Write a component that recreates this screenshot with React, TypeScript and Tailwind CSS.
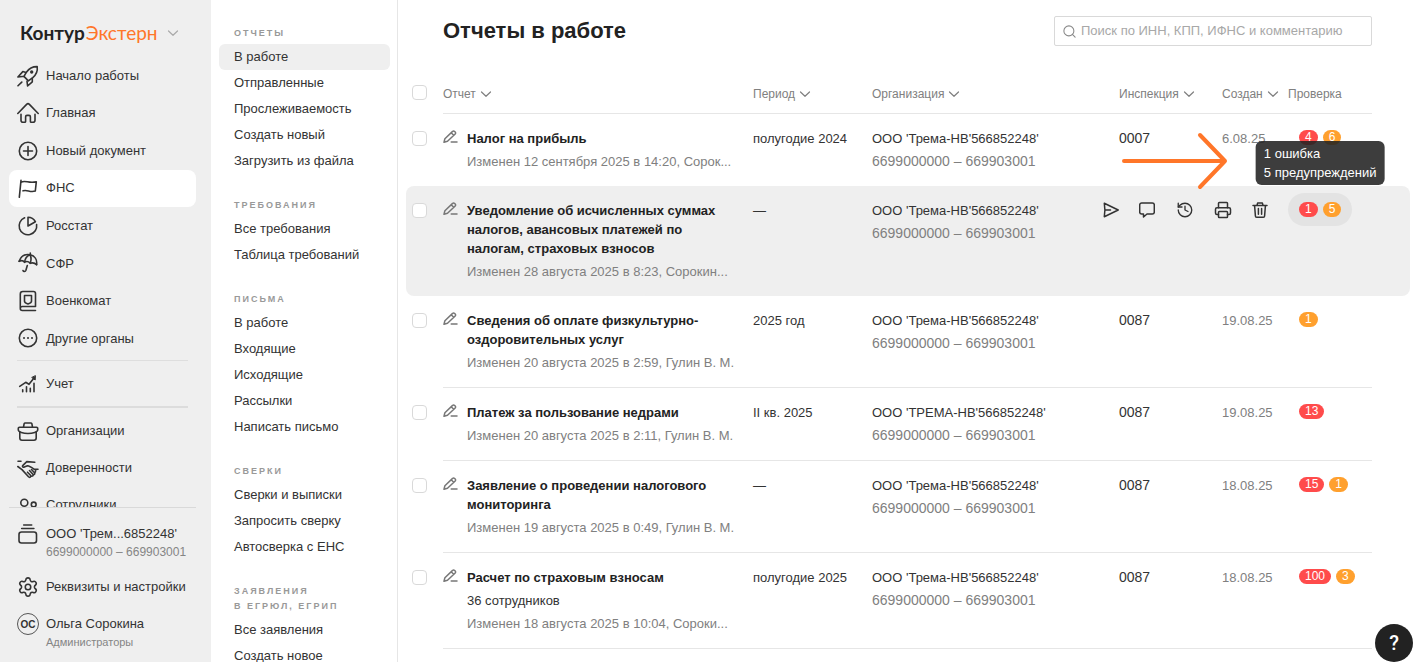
import type { ReactNode } from 'react';
import { History, Printer, Search, Settings } from 'lucide-react';

function Icon({ children }: { children: ReactNode }) {
  return (
    <svg
      viewBox="0 0 22 22"
      className="h-[22px] w-[22px] shrink-0"
      fill="none"
      stroke="currentColor"
      strokeWidth="1.6"
      strokeLinecap="round"
      strokeLinejoin="round"
      aria-hidden="true"
    >
      {children}
    </svg>
  );
}

const icons = {
  rocket: (
    <Icon>
      <path d="M20.2 1.6c.6 4.4-.9 8-4.4 11l-4.5 3.3L7 11.4l2.4-4.2c2.7-3.8 6.4-5.7 10.8-5.6z" />
      <path d="M9 7.5 5.800 6.600.9 12l4.300-.5h1.800M15.300 13.200v3.600l-4.700 4.200-.6-4.800M1 20.800l3.800-3.700" />
      <circle cx="14.7" cy="7" r=".9" fill="currentColor" />
    </Icon>
  ),
  home: (
    <Icon>
      <path d="M.8 11.5 9.6 2.4a2 2 0 0 1 2.8 0l8.8 9.1" />
      <path d="M4 12.3v5.9a2 2 0 0 0 2 2h1.8a.8.8 0 0 0 .8-.8v-4.6a1.4 1.4 0 0 1 1.4-1.4h2a1.4 1.4 0 0 1 1.4 1.4v4.6a.8.8 0 0 0 .8.8H16a2 2 0 0 0 2-2v-5.9" />
    </Icon>
  ),
  plus: (
    <Icon>
      <circle cx="11" cy="11" r="8.7" />
      <path d="M11 6.5v9M6.5 11h9" />
    </Icon>
  ),
  flag: (
    <Icon>
      <path d="M4 3.3 2.3 20.3M4 5.2c4.500-2.400 7.500 1.600 15.300-.4l-1 9.200c-5.500 1.800-8-1.800-12.300-.2" />
    </Icon>
  ),
  pie: (
    <Icon>
      <path d="M7.6 2.8a8.800 8.800 0 1 0 12 6.700" />
      <path d="M11 11V2.2c3 0 5.8 1.6 7.4 4.5z" />
    </Icon>
  ),
  umbrella: (
    <Icon>
      <path d="M2.2 9.3C4 3.8 8.500 1.900 13 2.700c4.700 1 7.300 5 6.600 9.900" />
      <path d="M2.2 9.3c2-1 4.1-.7 5.3 1 1.9-1.2 4.2-.7 5.6 1 2.2-.8 4.7-.5 6.5 1.3M13 2.7c-3 1-5 4-5.5 7.6M13 2.7c1.4 2.800 1.300 5.800.1 8.600M13.300 1v1.700M10.300 13.500l-1.400 4.800c-.5 1.500-2.500 1.500-2.900.2" />
    </Icon>
  ),
  book: (
    <Icon>
      <path d="M3.3 18.2V4a2.5 2.5 0 0 1 2.5-2.5h10.7a2 2 0 0 1 2 2v13H5.300a2 2 0 0 0 0 4h13.200" />
      <path d="M7.5 5.5h7v5.7c0 1.8-3.5 2.7-3.5 2.7s-3.5-.9-3.500-2.700z" />
    </Icon>
  ),
  dots: (
    <Icon>
      <circle cx="11" cy="11" r="8.7" />
      <path d="M7 11h.01M11 11h.01M15 11h.01" strokeWidth="2" />
    </Icon>
  ),
  chart: (
    <Icon>
      <path d="m2.7 13.3 6-4 3.3 2 5-6.3M5.7 16.7v2M9.5 13.7v5M13.3 15.3v3.4M17 10.300v8.400" />
      <path d="m18.4 3-.2 4-3.200-2.300z" fill="currentColor" strokeWidth="1" />
    </Icon>
  ),
  briefcase: (
    <Icon>
      <path d="M2.8 12.3v5.7a2.2 2.2 0 0 0 2.2 2.2h12a2.2 2.2 0 0 0 2.2-2.2v-5.7" />
      <path d="M2.5 7.2h17a1.2 1.2 0 0 1 1.2 1.3v1.8c0 1.3-4.700 3.200-9.700 3.200s-9.700-1.900-9.700-3.200V8.500a1.200 1.200 0 0 1 1.200-1.300zM6.500 7l.6-3.200c.2-.6.6-.8 1.200-.8h5.400c.6 0 1 .2 1.200.8l.6 3.200" />
    </Icon>
  ),
  handshake: (
    <Icon>
      <path d="M1 4.300h3M17.800 5.200 9.800 4.600 5.700 8.600c-.6 1 .5 2 1.600 1.500l3.200-1.300c2.200.3 4.600 2 7 3.600l3.500-.2M.8 9.500 5 12.600l6.500 7.200c1.200 1.200 2.800 0 2-1.400M10.500 15.200l3.500 3.600c1.200 1 2.700-.1 1.900-1.500l-3.400-3.800M15.900 17.400c1.300.7 2.300-.5 1.600-1.700l-3-3.200M17.600 15.600c1-.3 1.200-1.500 1-3.200" />
    </Icon>
  ),
  people: (
    <Icon>
      <circle cx="7.3" cy="8.7" r="3.5" />
      <circle cx="16.7" cy="10.5" r="2.4" />
      <path d="M3 15.500c.8-1 2.400-1.500 4.300-1.500s3.500.5 4.300 1.500" />
    </Icon>
  ),
  company: (
    <Icon>
      <rect x="2" y="9" width="17.5" height="11" rx="2.5" />
      <path d="M4.7 5.5h12.2M6.7 2h8" />
    </Icon>
  ),
};

function Chevron() {
  return (
    <svg viewBox="0 0 12 8" className="h-2 w-3 shrink-0" fill="none" stroke="currentColor" strokeWidth="1.2" strokeLinecap="round" strokeLinejoin="round" aria-hidden="true">
      <path d="m1.5 2 4.500 4.300L10.500 2" />
    </svg>
  );
}

function SideLink({ icon, label, active }: { icon: ReactNode; label: string; active?: boolean }) {
  return (
    <a
      href="#"
      className={`flex h-[37px] shrink-0 items-center gap-[7px] rounded-lg px-2 ${active ? 'bg-white' : ''}`}
    >
      {icon}
      <span className="whitespace-nowrap">{label}</span>
    </a>
  );
}

function Sidebar() {
  return (
    <aside className="flex h-full w-[211px] shrink-0 flex-col bg-[#efefef] pl-[9px] pr-[15px] text-[13px] text-[#333]">
      <button type="button" className="ml-[11px] mt-[19px] flex h-7 shrink-0 items-center text-left font-[Lato,sans-serif] text-[19px]">
        <span className="font-bold text-[#222]">Контур</span>
        <span className="ml-px text-[#ff7629]">Экстерн</span>
        <span className="ml-[9px] text-[#aaa]">
          <Chevron />
        </span>
      </button>
      <nav className="mt-2.5 min-h-0 flex-1 overflow-hidden">
        <div className="flex h-[300px] flex-col justify-between">
          <SideLink icon={icons.rocket} label="Начало работы" />
          <SideLink icon={icons.home} label="Главная" />
          <SideLink icon={icons.plus} label="Новый документ" />
          <SideLink icon={icons.flag} label="ФНС" active />
          <SideLink icon={icons.pie} label="Росстат" />
          <SideLink icon={icons.umbrella} label="СФР" />
          <SideLink icon={icons.book} label="Военкомат" />
          <SideLink icon={icons.dots} label="Другие органы" />
        </div>
        <div className="mx-2 mb-1 mt-[3px] h-px bg-[#dedede]" />
        <SideLink icon={icons.chart} label="Учет" />
        <div className="mx-2 my-1 h-0.5 bg-[#dcdcdc]" />
        <SideLink icon={icons.briefcase} label="Организации" />
        <SideLink icon={icons.handshake} label="Доверенности" />
        <SideLink icon={icons.people} label="Сотрудники" />
      </nav>
      <div className="h-[155px] shrink-0 border-t border-[#d9d9d9] px-2">
        <a href="#" className="mt-[15px] flex gap-[7px]">
          {icons.company}
          <span className="whitespace-nowrap">
            <span className="block leading-[22px]">ООО 'Трем...6852248'</span>
            <span className="block text-xs leading-[14px] text-[#858585]">6699000000 – 669903001</span>
          </span>
        </a>
        <a href="#" className="mt-[17px] flex items-center gap-[7px]">
          <Settings className="h-[22px] w-[22px] shrink-0" strokeWidth={1.7} />
          <span className="whitespace-nowrap leading-[22px]">Реквизиты и настройки</span>
        </a>
        <a href="#" className="mt-[15px] flex gap-[7px]">
          <span className="flex h-[22px] w-[22px] shrink-0 items-center justify-center rounded-full border border-[#555] text-[10px] font-bold">
            ОС
          </span>
          <span className="whitespace-nowrap">
            <span className="block leading-[22px]">Ольга Сорокина</span>
            <span className="block text-[11px] leading-[14px] text-[#858585]">Администраторы</span>
          </span>
        </a>
      </div>
    </aside>
  );
}

const sections = [
  { title: 'ОТЧЕТЫ', items: ['В работе', 'Отправленные', 'Прослеживаемость', 'Создать новый', 'Загрузить из файла'] },
  { title: 'ТРЕБОВАНИЯ', items: ['Все требования', 'Таблица требований'] },
  { title: 'ПИСЬМА', items: ['В работе', 'Входящие', 'Исходящие', 'Рассылки', 'Написать письмо'] },
  { title: 'СВЕРКИ', items: ['Сверки и выписки', 'Запросить сверку', 'Автосверка с ЕНС'] },
  { title: 'ЗАЯВЛЕНИЯ\nВ ЕГРЮЛ, ЕГРИП', items: ['Все заявления', 'Создать новое'] },
];

function SectionNav() {
  return (
    <nav className="flex h-full w-[187px] shrink-0 flex-col gap-6 overflow-hidden border-r border-[#e6e6e6] pl-2 pr-[7px] pt-[26px] text-[13px] text-[#333]">
      {sections.map((section, s) => (
        <div key={section.title} className="shrink-0">
          <h2 className="mb-[3px] whitespace-pre-line px-[15px] text-[9px] font-bold leading-[15px] tracking-[2px] text-[#999]">
            {section.title}
          </h2>
          <ul>
            {section.items.map((item, i) => (
              <li key={item}>
                <a
                  href="#"
                  className={`block whitespace-nowrap rounded-md px-[15px] leading-[26px] ${s === 0 && i === 0 ? 'bg-[#efefef]' : ''}`}
                >
                  {item}
                </a>
              </li>
            ))}
          </ul>
        </div>
      ))}
    </nav>
  );
}

type Report = {
  title: string;
  extra?: string;
  changed: string;
  period: string;
  org: string;
  inspection?: string;
  created?: string;
  errors?: number;
  warnings?: number;
};

const reports: Report[] = [
  {
    title: 'Налог на прибыль',
    changed: 'Изменен 12 сентября 2025 в 14:20, Сорок...',
    period: 'полугодие 2024',
    org: "ООО 'Трема-НВ'566852248'",
    inspection: '0007',
    created: '6.08.25',
    errors: 4,
    warnings: 6,
  },
  {
    title: 'Уведомление об исчисленных суммах\nналогов, авансовых платежей по\nналогам, страховых взносов',
    changed: 'Изменен 28 августа 2025 в 8:23, Сорокин...',
    period: '—',
    org: "ООО 'Трема-НВ'566852248'",
    errors: 1,
    warnings: 5,
  },
  {
    title: 'Сведения об оплате физкультурно-\nоздоровительных услуг',
    changed: 'Изменен 20 августа 2025 в 2:59, Гулин В. М.',
    period: '2025 год',
    org: "ООО 'Трема-НВ'566852248'",
    inspection: '0087',
    created: '19.08.25',
    warnings: 1,
  },
  {
    title: 'Платеж за пользование недрами',
    changed: 'Изменен 20 августа 2025 в 2:11, Гулин В. М.',
    period: 'II кв. 2025',
    org: "ООО 'ТРЕМА-НВ'566852248'",
    inspection: '0087',
    created: '19.08.25',
    errors: 13,
  },
  {
    title: 'Заявление о проведении налогового\nмониторинга',
    changed: 'Изменен 19 августа 2025 в 0:49, Гулин В. М.',
    period: '—',
    org: "ООО 'Трема-НВ'566852248'",
    inspection: '0087',
    created: '18.08.25',
    errors: 15,
    warnings: 1,
  },
  {
    title: 'Расчет по страховым взносам',
    extra: '36 сотрудников',
    changed: 'Изменен 18 августа 2025 в 10:04, Сороки...',
    period: 'полугодие 2025',
    org: "ООО 'Трема-НВ'566852248'",
    inspection: '0087',
    created: '18.08.25',
    errors: 100,
    warnings: 3,
  },
];

function CheckBox({ label }: { label: string }) {
  return (
    <input
      type="checkbox"
      aria-label={label}
      className="ml-[6px] block h-[15px] w-[15px] appearance-none rounded-[4px] border border-[#d9d9d9] bg-white"
    />
  );
}

function PencilIcon() {
  return (
    <svg viewBox="0 0 16 16" className="h-4 w-4 shrink-0 text-[#777]" fill="none" stroke="currentColor" strokeWidth="1.5" strokeLinejoin="round" strokeLinecap="round" aria-hidden="true">
      <path d="M1 13.2l.9-3.500L9.600 2.400a1.400 1.400 0 0 1 2 0l.6.6a1.400 1.400 0 0 1 0 2L4.500 12.300zM8.200 3.800l2.500 2.500M8.200 13h5.800" />
    </svg>
  );
}

function Badge({ value, tone }: { value: number; tone: 'error' | 'warning' }) {
  return (
    <span
      className={`block rounded-full px-1.5 text-center text-xs leading-[15px] text-white ${tone === 'error' ? 'bg-[#ff4b4b]' : 'bg-[#ffa02e]'}`}
    >
      {value}
    </span>
  );
}

function HeaderCell({ label, sortable = true }: { label: string; sortable?: boolean }) {
  return (
    <th scope="col" className="border-b border-[#e6e6e6] p-0 text-left align-top font-normal">
      {sortable ? (
        <button type="button" className="flex h-5 items-center gap-1 whitespace-nowrap">
          {label}
          <Chevron />
        </button>
      ) : (
        <span className="block h-5 leading-5">{label}</span>
      )}
    </th>
  );
}

const actionButtons = [
  {
    label: 'Отправить',
    icon: (
      <svg viewBox="0 0 16 16" className="h-4 w-4" fill="none" stroke="currentColor" strokeWidth="1.5" strokeLinejoin="round" strokeLinecap="round">
        <path d="M1.300 1.300 15.200 8 1.300 14.700 1.900 8zM1.900 8h5.600" />
      </svg>
    ),
  },
  {
    label: 'Комментарий',
    icon: (
      <svg viewBox="0 0 16 16" className="h-4 w-4" fill="none" stroke="currentColor" strokeWidth="1.5" strokeLinejoin="round">
        <path d="M2.700 1h10.600a2 2 0 0 1 2 2v7a2 2 0 0 1-2 2H8l-3.500 3v-3H2.700a2 2 0 0 1-2-2V3a2 2 0 0 1 2-2z" />
      </svg>
    ),
  },
  { label: 'История', icon: <History className="h-[18px] w-[18px]" strokeWidth={1.8} /> },
  { label: 'Печать', icon: <Printer className="h-[18px] w-[18px]" strokeWidth={2} /> },
  {
    label: 'Удалить',
    icon: (
      <svg viewBox="0 0 16 16" className="h-4 w-4" fill="none" stroke="currentColor" strokeWidth="1.5" strokeLinejoin="round" strokeLinecap="round">
        <path d="M1 3.500h14M5 3.300l.6-2.200h4.800l.6 2.200M2.600 3.700l.8 10.200a1.300 1.300 0 0 0 1.300 1.300h6.600a1.300 1.300 0 0 0 1.300-1.300l.8-10.200M6.400 6.500v5.700M9.600 6.500v5.700" />
      </svg>
    ),
  },
];

function ReportRow({ report, index }: { report: Report; index: number }) {
  const active = index === 1;
  const cell = `px-0 py-[15px] align-top ${active ? 'bg-[#efefef]' : ''} ${index > 1 ? 'border-b border-[#e6e6e6]' : ''}`;
  const edge = `px-0 pb-0 pt-[17px] align-top ${active ? 'bg-[#efefef]' : ''}`;
  return (
    <tr>
      <td className={`${edge} rounded-l-lg`}>
        <CheckBox label={report.title} />
      </td>
      <td className={cell}>
        <div className="flex gap-2">
          <PencilIcon />
          <div className="whitespace-pre">
            <a href="#" className="block font-bold text-[#222]">{report.title}</a>
            {report.extra && <div className="mt-1">{report.extra}</div>}
            <div className="mt-1 text-[#808080]">{report.changed}</div>
          </div>
        </div>
      </td>
      <td className={cell}>{report.period}</td>
      <td className={cell}>
        <div>{report.org}</div>
        <div className="mt-1 text-sm leading-[19px] text-[#808080]">6699000000 – 669903001</div>
      </td>
      {active ? (
        <td colSpan={2} className={cell}>
          <div className="-ml-4 mr-5 flex h-[17px] items-center justify-between">
            {actionButtons.map((action) => (
              <button key={action.label} type="button" aria-label={action.label}>
                {action.icon}
              </button>
            ))}
          </div>
        </td>
      ) : (
        <>
          <td className={`${cell} text-sm leading-[19px]`}>{report.inspection}</td>
          <td className={`${cell} text-[#808080]`}>{report.created}</td>
        </>
      )}
      <td className={cell}>
        <div className="relative -my-2 inline-block align-top">
          <div className={`flex h-[33px] items-center gap-[5px] rounded-full px-[11px] ${active ? 'bg-[#e3e3e3]' : ''}`}>
            {report.errors !== undefined && <Badge value={report.errors} tone="error" />}
            {report.warnings !== undefined && <Badge value={report.warnings} tone="warning" />}
          </div>
          {active && (
            <div role="tooltip" className="absolute bottom-full left-1/2 z-10 mb-2 -translate-x-1/2 whitespace-nowrap rounded-md bg-[#222222]/88 px-2 py-[3px] text-white">
              1 ошибка
              <br />5 предупреждений
            </div>
          )}
        </div>
      </td>
      <td className={`${edge} rounded-r-lg`} />
    </tr>
  );
}

export default function App() {
  return (
    <div className="flex h-screen overflow-hidden bg-white font-['Liberation_Sans',Arial,sans-serif] text-[#333]">
      <Sidebar />
      <SectionNav />
      <main className="relative min-w-0 flex-1 overflow-hidden px-2">
        <header className="flex items-center justify-between pl-[37px] pr-[38px] pt-4">
          <h1 className="text-[22px] font-bold leading-[30px] text-[#222]">Отчеты в работе</h1>
          <label className="flex h-[30px] w-[318px] items-center gap-1 rounded-[2px] border border-[#d9d9d9] px-[7px]">
            <Search className="h-[15px] w-[15px] shrink-0 text-[#888]" strokeWidth={1.7} />
            <input
              type="text"
              aria-label="Поиск"
              placeholder="Поиск по ИНН, КПП, ИФНС и комментарию"
              className="min-w-0 flex-1 text-[13px] text-[#333] outline-none placeholder:text-[#a8a8a8]"
            />
          </label>
        </header>
        <table className="mt-[38px] w-full table-fixed border-separate border-spacing-0 text-[13px] leading-[19px]">
          <colgroup>
            <col className="w-[37px]" />
            <col />
            <col className="w-[119px]" />
            <col className="w-[247px]" />
            <col className="w-[103px]" />
            <col className="w-[66px]" />
            <col className="w-[84px]" />
            <col className="w-[38px]" />
          </colgroup>
          <thead className="text-xs text-[#808080]">
            <tr className="h-[30px]">
              <td className="p-0 pt-px align-top">
                <CheckBox label="Выбрать все" />
              </td>
              <HeaderCell label="Отчет" />
              <HeaderCell label="Период" />
              <HeaderCell label="Организация" />
              <HeaderCell label="Инспекция" />
              <HeaderCell label="Создан" />
              <HeaderCell label="Проверка" sortable={false} />
              <td className="p-0" />
            </tr>
          </thead>
          <tbody>
            {reports.map((report, index) => (
              <ReportRow key={report.title} report={report} index={index} />
            ))}
          </tbody>
        </table>
        <svg
          viewBox="0 0 108 58"
          className="pointer-events-none absolute right-[190px] top-[132px] h-[58px] w-[108px]"
          fill="none"
          stroke="#ff7629"
          strokeWidth="4"
          strokeLinecap="round"
          strokeLinejoin="round"
          aria-hidden="true"
        >
          <path d="M4 29h101M80 3l25 26-25 26" />
        </svg>
      </main>
      <button
        type="button"
        aria-label="Помощь"
        className="fixed bottom-0 right-[5px] flex h-[38px] w-[38px] items-center justify-center rounded-full bg-[#222] font-[Roboto,sans-serif] text-[20px] font-medium text-white"
      >
        ?
      </button>
    </div>
  );
}
